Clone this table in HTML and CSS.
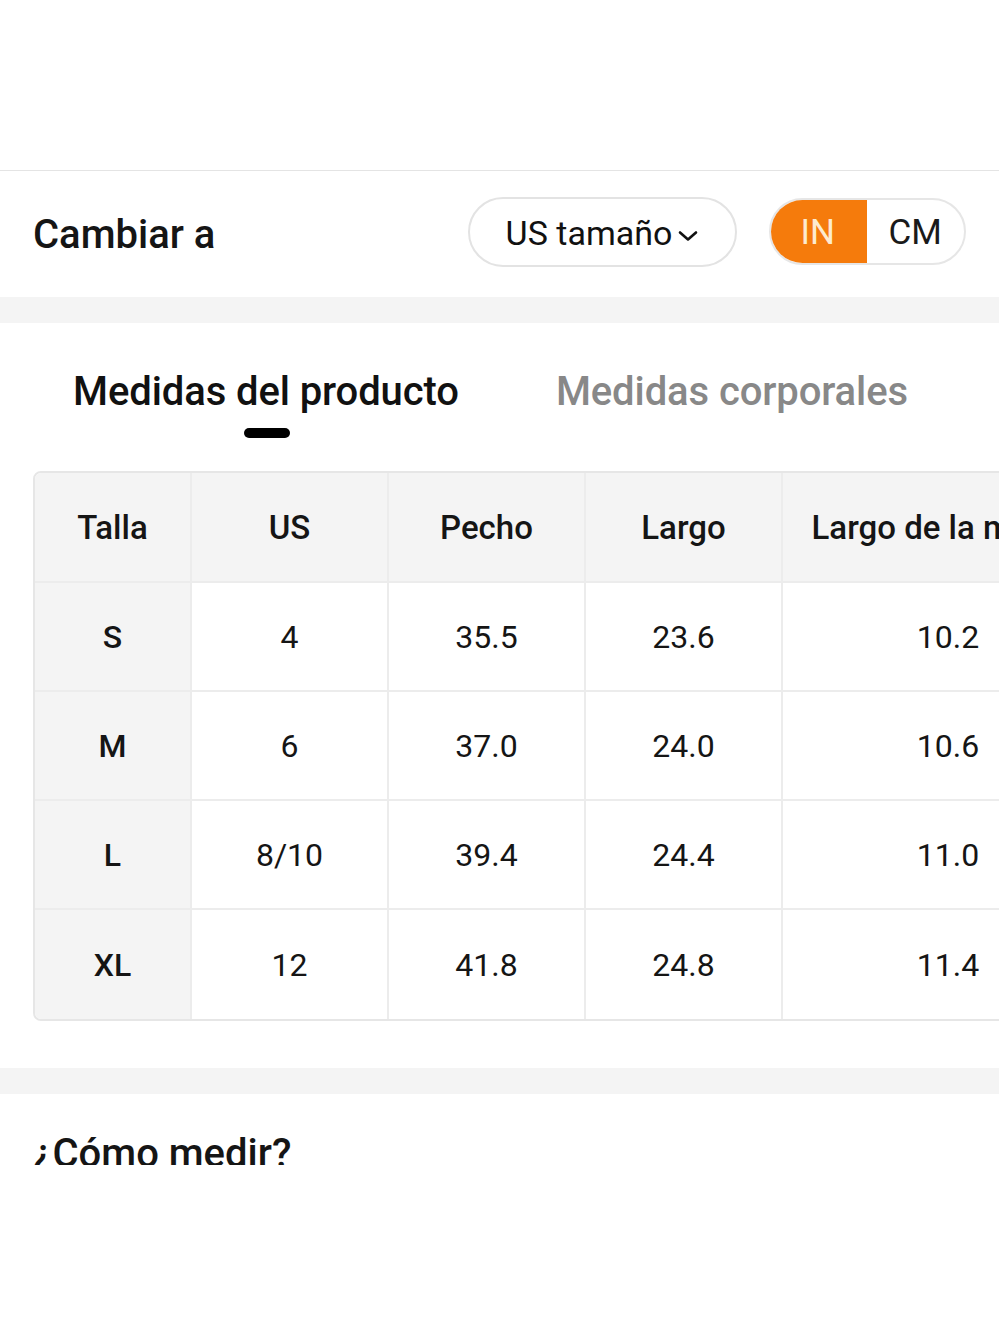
FILE: index.html
```html
<!DOCTYPE html>
<html lang="es">
<head>
<meta charset="utf-8">
<title>Guía de tallas</title>
<link rel="stylesheet" href="styles.css">
</head>
<body>
<div class="page">
  <div class="top-space"></div>
  <div class="switch-row">
    <div class="switch-label">Cambiar a</div>
    <div class="switch-controls">
      <div class="size-pill">US tamaño<svg class="chev" width="22" height="14" viewBox="0 0 22 14"><path d="M3 3.5 L11 10.5 L19 3.5" fill="none" stroke="#111" stroke-width="2.6" stroke-linecap="round" stroke-linejoin="round"/></svg></div>
      <div class="unit-toggle">
        <div class="unit unit-active">IN</div>
        <div class="unit">CM</div>
      </div>
    </div>
  </div>
  <div class="band"></div>
  <div class="tabs">
    <div class="tab tab-active">Medidas del producto<span class="indicator"></span></div>
    <div class="tab">Medidas corporales</div>
  </div>
  <div class="table-wrap">
    <table class="size-table">
      <thead>
        <tr><th class="c1">Talla</th><th class="c2">US</th><th class="c2">Pecho</th><th class="c2">Largo</th><th class="c3">Largo de la manga</th></tr>
      </thead>
      <tbody>
        <tr><td class="sz">S</td><td>4</td><td>35.5</td><td>23.6</td><td>10.2</td></tr>
        <tr><td class="sz">M</td><td>6</td><td>37.0</td><td>24.0</td><td>10.6</td></tr>
        <tr><td class="sz">L</td><td>8/10</td><td>39.4</td><td>24.4</td><td>11.0</td></tr>
        <tr><td class="sz">XL</td><td>12</td><td>41.8</td><td>24.8</td><td>11.4</td></tr>
      </tbody>
    </table>
  </div>
  <div class="band band-2"></div>
  <div class="howto">
    <div class="howto-title">¿Cómo medir?</div>
  </div>
</div>
</body>
</html>
```

FILE: styles.css
```css
* { box-sizing: border-box; }
html, body { margin: 0; padding: 0; background: #fff; }
body {
  font-family: Roboto, "Noto Sans", "Liberation Sans", sans-serif;
  color: #151515;
  width: 999px;
  overflow: hidden;
}
.page { width: 999px; }
.top-space {
  height: 171px;
  border-bottom: 1px solid #e4e4e4;
}
.switch-row {
  height: 126px;
  display: flex;
  align-items: center;
  justify-content: space-between;
  padding: 0 33px;
}
.switch-label {
  font-size: 40px;
  font-weight: 500;
}
.switch-controls {
  display: flex;
  align-items: center;
  gap: 32px;
  margin-top: -4px;
}
.size-pill {
  width: 269px;
  height: 70px;
  border: 2px solid #e3e3e3;
  border-radius: 35px;
  display: flex;
  align-items: center;
  justify-content: center;
  font-size: 34px;
  color: #111;
  padding-top: 2px;
}
.chev { margin-left: 5px; margin-top: 6px; }
.unit-toggle {
  width: 197px;
  height: 67px;
  border: 2px solid #e6e6e6;
  border-radius: 34px;
  display: flex;
  overflow: hidden;
  margin-top: -2px;
}
.unit {
  flex: 1;
  display: flex;
  align-items: center;
  justify-content: center;
  font-size: 35px;
  color: #1a1a1a;
  padding-top: 2px;
}
.unit-active {
  background: #f57b0c;
  color: #fdebd0;
  margin: -2px 0 -2px -2px;
}
.band {
  height: 26px;
  background: #f4f4f4;
}
.tabs {
  display: flex;
  gap: 97px;
  padding: 46px 0 0 73px;
  height: 148px;
}
.tab {
  position: relative;
  font-size: 40px;
  font-weight: 500;
  line-height: 46px;
  letter-spacing: -0.1px;
  color: #888;
  height: 46px;
}
.tab-active { color: #111; }
.indicator {
  position: absolute;
  left: 50%;
  top: 59px;
  width: 46px;
  height: 10px;
  margin-left: -22px;
  border-radius: 5px;
  background: #000;
}
.table-wrap {
  margin-left: 33px;
  width: 966px;
  overflow: hidden;
}
.size-table {
  border-collapse: separate;
  border-spacing: 0;
  width: 1078px;
  table-layout: fixed;
  border: 2px solid #e6e6e6;
  border-radius: 8px;
  overflow: hidden;
}
.size-table th, .size-table td {
  text-align: center;
  vertical-align: middle;
  border-right: 2px solid #ececec;
  border-bottom: 2px solid #ececec;
  font-size: 32px;
  color: #151515;
  white-space: nowrap;
  overflow: hidden;
}
.size-table th {
  height: 110px;
  background: #f4f4f4;
  font-weight: 500;
  font-size: 33px;
}
.size-table td {
  height: 109px;
  font-weight: 400;
}
.size-table td.sz {
  background: #f4f4f4;
  font-weight: 500;
}
.size-table tr:last-child td { border-bottom: none; }
.size-table th:last-child, .size-table td:last-child { border-right: none; }
.c1 { width: 157px; }
.c2 { width: 197px; }
.c3 { width: 330px; }
.band-2 { margin-top: 47px; }
.howto {
  height: 71px;
  overflow: hidden;
  padding: 37px 0 0 33px;
}
.howto-title {
  font-size: 40px;
  font-weight: 500;
  line-height: 46px;
}
```
